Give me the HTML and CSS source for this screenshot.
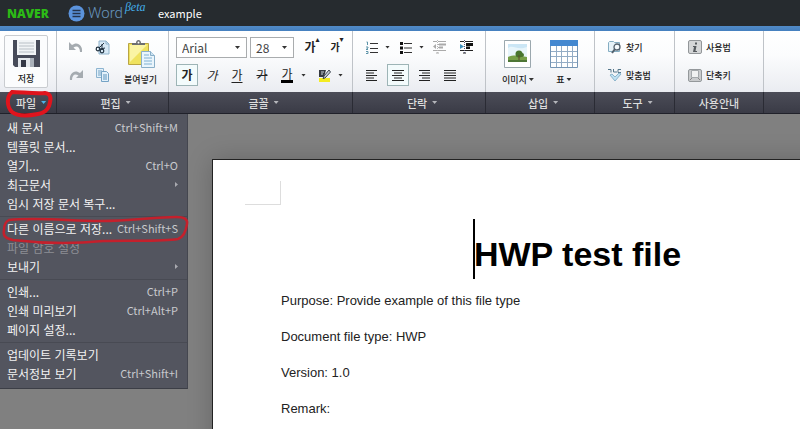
FILE: index.html
```
<!DOCTYPE html>
<html lang="ko">
<head>
<meta charset="utf-8">
<title>example</title>
<link rel="stylesheet" href="styles.css">
</head>
<body>

<div class="header">
	<a class="naver" href="#">NAVER</a>
	<a class="word" href="#">
		<svg width="17" height="17" viewBox="0 0 17 17"><circle cx="8.500" cy="8.500" r="8" fill="#5b93dc"/><path d="M4.500 5.500h8M4.500 8.500h8M4.500 11.500h8" stroke="#25344c" stroke-width="1.500"/></svg>
		<span class="wordName">Word</span><i class="beta">βeta</i>
	</a>
	<span class="docName">example</span>
</div>

<div class="ribbon">
	<div class="group gFile">
		<div class="tools">
			<button class="big save" type="button">
				<svg width="27" height="27" viewBox="0 0 27 27"><path d="M0 0h27v27H2l-2-2z" fill="#474b59"/><path d="M4 0h19v15H4z" fill="#f1f4f6"/><path d="M6 3h15M6 6h15M6 9h15M6 12h15" stroke="#b9c0c6"/><path d="M5 18h16v9H5z" fill="#e4e8ec"/><path d="M8 20h5v7H8z" fill="#343845"/><path d="M17 18h4v9h-4z" fill="#aab1ba"/></svg>
				<span>저장</span>
			</button>
		</div>
		<button class="title" type="button">파일<i class="arrow blue"></i></button>
	</div>

	<div class="group gEdit">
		<div class="tools">
			<div class="pairs">
				<button class="tool" type="button" aria-label="실행 취소"><svg width="14" height="12" viewBox="0 0 14 12"><path d="M0 1v8h7L4.500 6.500C8 4 11 6 11 11h2C14 4 8 0 3 4z" fill="#a5abb0"/></svg></button>
				<button class="tool" type="button" aria-label="잘라내기"><svg width="15" height="15" viewBox="0 0 15 15"><path d="M4 1h7l3 3v10H4z" fill="#d7e9f6" stroke="#8fb2cb"/><path d="M11 1v3h3" fill="none" stroke="#8fb2cb"/><path d="M4 8l5-5M5 9l5-1M7 4v6" stroke="#223342"/><circle cx="3" cy="9" r="1.800" fill="none" stroke="#223342" stroke-width="1.200"/><circle cx="7" cy="11" r="1.800" fill="none" stroke="#223342" stroke-width="1.200"/></svg></button>
				<button class="tool" type="button" aria-label="다시 실행"><svg width="14" height="12" viewBox="0 0 14 12"><path d="M14 1v8H7l2.500-2.500C6 4 3 6 3 11H1C0 4 6 0 11 4z" fill="#a5abb0"/></svg></button>
				<button class="tool" type="button" aria-label="복사"><svg width="15" height="14" viewBox="0 0 15 14"><path d="M1.500.5h7v9h-7z" fill="#e2f0fa" stroke="#8db4d0"/><path d="M3 3h4M3 5h4M3 7h3" stroke="#75a3c5"/><path d="M6.500 3.500h5l2 2v8h-7z" fill="#e2f0fa" stroke="#75a3c5"/><path d="M8 7h4M8 9h4M8 11h4" stroke="#5f95bd"/></svg></button>
			</div>
			<button class="big" type="button">
				<svg width="28" height="28" viewBox="0 0 28 28"><path d="M1.500 3.500h20v21h-20z" fill="#efe25f" stroke="#b9a544"/><path d="M3 5h17L3 22z" fill="#faf4a4"/><path d="M5 5V3h4c0-4 5-4 5 0h4v2z" fill="#6c6e70"/><circle cx="11.500" cy="2.500" r="1" fill="#fff"/><path d="M14.500 11.500h9l4 4v12h-13z" fill="#eaf5fc" stroke="#8aafc8"/><path d="M23.500 11.500v4h4" fill="#cce3f2" stroke="#8aafc8"/><path d="M17 15h5M17 18h8M17 21h8M17 24h8" stroke="#80b1d2"/></svg>
				<span>붙여넣기</span>
			</button>
		</div>
		<button class="title" type="button">편집<i class="arrow"></i></button>
	</div>

	<div class="group gFont">
		<div class="tools rows">
			<div class="row">
				<select class="fontName" aria-label="글꼴"><option>Arial</option></select>
				<select class="fontSize" aria-label="크기"><option>28</option></select>
				<button class="tool grow" type="button" aria-label="크게"><b>가</b><i class="mark">▴</i></button>
				<button class="tool shrink" type="button" aria-label="작게"><b>가</b><i class="mark">▾</i></button>
			</div>
			<div class="row">
				<button class="tool on" type="button"><b>가</b></button>
				<button class="tool" type="button"><em>가</em></button>
				<button class="tool" type="button"><u>가</u></button>
				<button class="tool" type="button"><s>가</s></button>
				<button class="tool" type="button"><span class="textColor">가</span></button>
				<i class="arrow dark"></i>
				<button class="tool" type="button" aria-label="형광펜"><svg width="13" height="13" viewBox="0 0 13 13"><path d="M1 9h11v4H1z" fill="#f4ec22"/><path d="M1 1h7l-2 7H1z" fill="#353a42"/><path d="M3 3h3M3 5h2" stroke="#ccd3da"/><path d="M11 1l1.500 2L7 9l-2 .5L6 7z" fill="#c7cfd8" stroke="#3c4550"/></svg></button>
				<i class="arrow dark"></i>
			</div>
		</div>
		<button class="title" type="button">글꼴<i class="arrow"></i></button>
	</div>

	<div class="group gPara">
		<div class="tools rows">
			<div class="row">
				<button class="tool" type="button" aria-label="번호 매기기"><svg width="12" height="13" viewBox="0 0 12 13"><path d="M4 2.500h8M4 7.500h8M4 11.500h8" stroke="#333"/><path d="M.5 1h1v3M0 6h2v1L0 8.500h2M0 10.500h2v2H0" fill="none" stroke="#5c93a8"/></svg></button>
				<i class="arrow dark"></i>
				<button class="tool" type="button" aria-label="글머리 기호"><svg width="12" height="13" viewBox="0 0 12 13"><path d="M4 2.500h8M4 7h8M4 11.500h8" stroke="#333"/><path d="M0 1h3v3H0zM0 5.500h3v3H0zM0 10h3v3H0z" fill="#111"/></svg></button>
				<i class="arrow dark"></i>
				<button class="tool" type="button" aria-label="내어쓰기"><svg width="14" height="14" viewBox="0 0 14 14"><path d="M0 1.500h4M5 1.500h8M5 4.500h8M5 7.500h5M0 10.500h4M5 10.500h8M3 13h3" stroke="#aaa"/><path d="M6 3.500h7v2H6zM6 6.500h4v2H6zM3 4v5L0 6.500z" fill="#aaa"/><path d="M4.500 0v14" stroke="#bbb" stroke-dasharray="1 1"/></svg></button>
				<button class="tool indent" type="button" aria-label="들여쓰기"><svg width="14" height="14" viewBox="0 0 14 14"><path d="M0 1.500h4M5 1.500h8M0 10.500h4M5 10.500h8M3 13h3" stroke="#222"/><path d="M6 3h7v3H6zM6 6.500h4v2.500H6z" fill="#111"/><path d="M0 4v5l4-2.500z" fill="#3d8fbd"/><path d="M4.500 0v14" stroke="#557" stroke-dasharray="1 1"/></svg></button>
			</div>
			<div class="row align">
				<button class="tool" type="button" aria-label="왼쪽 정렬"><svg width="12" height="11" viewBox="0 0 12 11"><path d="M0 .5h11M0 3h8M0 5.500h11M0 8h8M0 10.500h11" stroke="#222"/></svg></button>
				<button class="tool on" type="button" aria-label="가운데 정렬"><svg width="12" height="11" viewBox="0 0 12 11"><path d="M0 .5h12M2 3h8M0 5.500h12M2 8h8M0 10.500h12" stroke="#222"/></svg></button>
				<button class="tool" type="button" aria-label="오른쪽 정렬"><svg width="12" height="11" viewBox="0 0 12 11"><path d="M1 .5h11M4 3h8M1 5.500h11M4 8h8M1 10.500h11" stroke="#222"/></svg></button>
				<button class="tool" type="button" aria-label="양쪽 정렬"><svg width="12" height="11" viewBox="0 0 12 11"><path d="M0 .5h12M0 3h12M0 5.500h12M0 8h12M0 10.500h12" stroke="#222"/></svg></button>
			</div>
		</div>
		<button class="title" type="button">단락<i class="arrow"></i></button>
	</div>

	<div class="group gInsert">
		<div class="tools">
			<button class="big" type="button">
				<svg width="27" height="28" viewBox="0 0 27 28"><path d="M.5.5h26v27H.5z" fill="#fff" stroke="#9ba8ae"/><path d="M4 4h19v18H4z" fill="#cbe6f5"/><path d="M4 8c5-4 9 3 19-1v10H4z" fill="#e7f5fb"/><path d="M4 17c6-3 13-1 19 0v5H4z" fill="#769f48"/><path d="M4 20h19v2H4z" fill="#4e7635"/><circle cx="15" cy="14" r="3.500" fill="#48752e"/><circle cx="18" cy="15" r="2" fill="#48752e"/><path d="M15 15v5" stroke="#5d4b2c"/></svg>
				<span>이미지<i class="arrow dark"></i></span>
			</button>
			<button class="big" type="button">
				<svg width="28" height="28" viewBox="0 0 28 28"><path d="M.5.5h27v27H.5z" fill="#fff" stroke="#7595b4"/><path d="M0 0h28v6H0z" fill="#4488d0"/><path d="M1 11.500h26M1 16.500h26M1 22.500h26M6.500 6v21M11.500 6v21M17.500 6v21M22.500 6v21" stroke="#93acc5"/></svg>
				<span>표<i class="arrow dark"></i></span>
			</button>
		</div>
		<button class="title" type="button">삽입<i class="arrow"></i></button>
	</div>

	<div class="group gTool">
		<div class="tools rows">
			<button class="line" type="button"><svg width="14" height="14" viewBox="0 0 14 14"><path d="M.5 2.500l1-1h4l1 1h5v9h-11z" fill="#e6f2f8" stroke="#84adc2"/><circle cx="9" cy="7" r="3" fill="#f4fafd" stroke="#53616d" stroke-width="1.300"/><path d="M7 9l-3 4" stroke="#53616d" stroke-width="2"/></svg>찾기</button>
			<button class="line" type="button"><svg width="14" height="14" viewBox="0 0 14 14"><path d="M0 1.500h3v3M5.500 1v3H9M13 1.500h-3v3h3" fill="none" stroke="#55778b"/><path d="M2 7l5 6 6-7-2-1-4 4-3-3z" fill="#bfe0f2" stroke="#8bb4cb"/></svg>맞춤법</button>
		</div>
		<button class="title" type="button">도구<i class="arrow"></i></button>
	</div>

	<div class="group gGuide">
		<div class="tools rows">
			<button class="line" type="button"><svg width="14" height="14" viewBox="0 0 14 14"><rect x=".5" y=".5" width="13" height="13" rx="1.500" fill="#d4d6d7" stroke="#929699"/><path d="M7 2.500h2v2H7zM5 6h3.500l-1 5H9v1H5l1-5H5z" fill="#555a5e"/></svg>사용법</button>
			<button class="line" type="button"><svg width="14" height="14" viewBox="0 0 14 14"><rect x=".5" y="1.500" width="13" height="12" rx="1.500" fill="#c9cbcd" stroke="#94989b"/><path d="M3.500 2.500h7v7h-7z" fill="#f0f1f1" stroke="#a4a8ab"/><path d="M2 12l2-2M12 12l-2-2" stroke="#888"/></svg>단축키</button>
		</div>
		<button class="title plain" type="button">사용안내</button>
	</div>

	<div class="group gRest">
		<div class="tools"></div>
		<div class="title"></div>
	</div>

	<svg class="pen penFile" width="52" height="32" viewBox="0 0 52 32"><path d="M9 4C18 4 32 6 42 5c7 1 6 7 4 13-2 5-5 7-11 8-10 2-21 2-26-2C4 19 3 9 9 4z" fill="none" stroke="#e0141d" stroke-width="4"/></svg>
</div>

<div class="workspace">
	<div class="page">
		<div class="corner"></div>
		<h1><span class="line1"><i class="caret"></i>HWP test file</span></h1>
		<p>Purpose: Provide example of this file type</p>
		<p>Document file type: HWP</p>
		<p>Version: 1.0</p>
		<p>Remark:</p>
	</div>

	<div class="menu">
		<button type="button">새 문서<kbd>Ctrl+Shift+M</kbd></button>
		<button type="button">템플릿 문서...</button>
		<button type="button">열기...<kbd>Ctrl+O</kbd></button>
		<button type="button">최근문서<i class="sub"></i></button>
		<button type="button">임시 저장 문서 복구...</button>
		<hr>
		<button type="button">다른 이름으로 저장...<kbd>Ctrl+Shift+S</kbd></button>
		<button type="button" disabled>파일 암호 설정</button>
		<button type="button">보내기<i class="sub"></i></button>
		<hr>
		<button type="button">인쇄...<kbd>Ctrl+P</kbd></button>
		<button type="button">인쇄 미리보기<kbd>Ctrl+Alt+P</kbd></button>
		<button type="button">페이지 설정...</button>
		<hr>
		<button type="button">업데이트 기록보기</button>
		<button type="button">문서정보 보기<kbd>Ctrl+Shift+I</kbd></button>
		<svg class="pen penSave" width="188" height="32" viewBox="0 0 188 32"><path d="M9 6C38 3 70 7 100 7c30 0 55-4 76-4 8 0 12 2 11 7-1 7-3 13-9 15-18 3-50 1-75 2-30 3-65 2-90-1C4 24 3 21 4 16c0-5 1-8 5-10z" fill="none" stroke="#c4202c" stroke-width="2.500"/></svg>
	</div>
</div>

</body>
</html>
```
FILE: styles.css
```
* {
	box-sizing: border-box;
}
html, body {
	height: 100%;
}
body {
	margin: 0;
	display: flex;
	flex-direction: column;
	overflow: hidden;
	font-family: "Noto Sans CJK KR", sans-serif;
	font-size: 12px;
	background: #808080;
}
button {
	margin: 0;
	padding: 0;
	border: 0;
	background: none;
	font: inherit;
	color: inherit;
	white-space: nowrap;
}
a {
	text-decoration: none;
}
svg {
	display: block;
	flex: none;
}

/* header */
.header {
	flex: none;
	display: flex;
	align-items: center;
	height: 31px;
	padding: 0 7px;
	background: #262b2f;
	border-bottom: 5px solid #4a86c8;
	border-image: linear-gradient(#336ba8, #72a8df 40%, #4580bf) 5;
}
.naver {
	width: 61px;
	font: 800 12px "Open Sans", sans-serif;
	color: #2cbb16;
}
.word {
	display: flex;
	align-items: center;
	width: 90px;
	height: 26px;
}
.wordName {
	margin-left: 3px;
	font: 300 15px/26px Roboto, sans-serif;
	color: #6794bd;
}
.beta {
	align-self: flex-start;
	margin-left: 2px;
	font: italic 12px/14px "Liberation Serif", serif;
	color: #43aee8;
}
.docName {
	font-size: 11px;
	color: #fff;
}

/* ribbon */
.ribbon {
	flex: none;
	position: relative;
	display: flex;
	border-bottom: 1px solid #20212a;
}
.group {
	flex: none;
	display: flex;
	flex-direction: column;
}
.gFile { width: 57px; }
.gEdit { width: 112px; }
.gFont { width: 184px; }
.gPara { width: 133px; }
.gInsert { width: 109px; }
.gTool { width: 80px; }
.gGuide { width: 89px; }
.gRest { flex: 1; }
.tools {
	display: flex;
	align-items: flex-start;
	height: 61px;
	padding: 5px 8px;
	background: linear-gradient(#fff, #fbfcfd 40%, #eaecf1);
	border-right: 1px solid #bfc3c8;
}
.title {
	display: flex;
	align-items: center;
	justify-content: center;
	height: 21px;
	padding-left: 6px;
	font-size: 11px;
	line-height: 20px;
	font-weight: 500;
	color: #ddd;
	background: linear-gradient(#4c4d58, #3a3b46);
	border-right: 1px solid #2a2b34;
}
.title.plain {
	padding-left: 0;
}
.gRest .tools, .gRest .title {
	border-right: 0;
}
.arrow {
	display: inline-block;
	width: 5px;
	height: 3px;
	margin-left: 5px;
	background: #b5b6bb;
	clip-path: polygon(0 0, 100% 0, 50% 100%);
}
.arrow.blue {
	background: #4bb4e8;
}
.arrow.dark {
	background: #333;
}
.rows {
	flex-direction: column;
	gap: 6px;
}
.row {
	display: flex;
	align-items: center;
	height: 22px;
}
.tool {
	flex: none;
	display: flex;
	align-items: center;
	justify-content: center;
	width: 22px;
	height: 22px;
	font-size: 12px;
	line-height: 16px;
	color: #222;
}
.tool.on {
	background: #f3fbfc;
	border: 1px solid #9db4b6;
}
.tool u {
	text-underline-offset: 2px;
}
.tool em {
	font-style: italic;
}
.textColor {
	line-height: 12px;
	border-bottom: 3px solid #000;
}
.big {
	display: flex;
	flex-direction: column;
	align-items: center;
	gap: 5px;
	padding-top: 4px;
	font-size: 9px;
	line-height: 14px;
	font-weight: 500;
	color: #222;
}
.big .arrow {
	margin: 0 0 2px 2px;
}
.gFile .tools {
	padding: 4px;
}
.save {
	width: 44px;
	height: 53px;
	border: 1px solid #c9ccd0;
	border-radius: 2px;
	background: #fbfcfd;
}
.pairs {
	display: grid;
	grid-template-columns: 22px 22px;
	gap: 6px 4px;
	margin-right: 11px;
}
.gFont .tools {
	padding-left: 7px;
}
.gFont .row {
	gap: 3px;
}
.gFont .row .arrow {
	margin: 0 4px 0 0;
}
select {
	appearance: none;
	height: 21px;
	margin: 0;
	padding: 0 5px;
	border: 1px solid #a9acae;
	border-radius: 0;
	font: 12px "Noto Sans CJK KR", sans-serif;
	color: #444;
	background: #fff url("data:image/svg+xml,%3Csvg xmlns='http://www.w3.org/2000/svg' width='5' height='3'%3E%3Cpath d='M0 0h5L2.500 3z' fill='%23333'/%3E%3C/svg%3E") no-repeat right 6px center;
}
.fontName {
	width: 71px;
}
.fontSize {
	width: 44px;
}
.grow {
	margin-left: 2px;
}
.shrink {
	font-size: 10px;
}
.mark {
	align-self: flex-start;
	width: 0;
	font: 8px/8px "DejaVu Sans", sans-serif;
}
.gPara .row .arrow {
	margin: 0 5px 0 2px;
}
.gPara .indent {
	margin-left: 5px;
}
.gPara .align {
	gap: 4px;
}
.gInsert .tools {
	gap: 16px;
	padding-left: 16px;
}
.line {
	display: flex;
	align-items: center;
	gap: 4px;
	height: 22px;
	font-size: 9px;
	font-weight: 500;
	color: #222;
}
.gTool .tools, .gGuide .tools {
	padding-left: 13px;
}

/* document */
.workspace {
	flex: 1;
	position: relative;
	min-height: 0;
	overflow: hidden;
	background: #808080;
}
.page {
	width: 731px;
	min-height: 1000px;
	margin: 45px 0 0 212px;
	padding: 21px 68px;
	border: 1px solid #222;
	background: #fff;
	box-shadow: 0 0 24px rgba(0, 0, 0, 0.2);
	font-family: "Liberation Sans", Arial, sans-serif;
	color: #222;
}
.corner {
	width: 36px;
	height: 24px;
	margin-left: -36px;
	border: solid #ddd;
	border-width: 0 1px 1px 0;
}
.page h1 {
	margin: 24px 0 4px;
	font-size: 34px;
	line-height: 50px;
	text-align: center;
	color: #000;
}
.line1 {
	position: relative;
}
.caret {
	position: absolute;
	left: -1px;
	bottom: -6px;
	width: 2px;
	height: 60px;
	background: #000;
}
.page p {
	margin: 0;
	font-size: 13px;
	line-height: 36px;
}

/* file menu */
.menu {
	position: absolute;
	left: 0;
	top: 0;
	width: 188px;
	padding: 4px 0 5px;
	background: #53555f;
	border-right: 1px solid #44464f;
	border-bottom: 1px solid #3c3e46;
	color: #f2f2f2;
}
.menu button {
	display: flex;
	align-items: center;
	width: 100%;
	height: 19px;
	padding: 0 9px 0 7px;
	line-height: 19px;
}
.menu button:disabled {
	color: #8d8e95;
}
.menu kbd {
	margin-left: auto;
	font: 11px/19px "Noto Sans CJK KR", sans-serif;
	color: #c8c9cd;
}
.menu hr {
	margin: 3px 0 2px;
	border: 0;
	border-top: 1px solid #484a53;
}
.sub {
	width: 3px;
	height: 5px;
	margin-left: auto;
	background: #a9aab0;
	clip-path: polygon(0 0, 100% 50%, 0 100%);
}

/* red marker */
.pen {
	position: absolute;
	pointer-events: none;
	overflow: visible;
}
.penFile {
	left: 3px;
	top: 57px;
	z-index: 2;
}
.penSave {
	left: 0;
	top: 100px;
}
```
